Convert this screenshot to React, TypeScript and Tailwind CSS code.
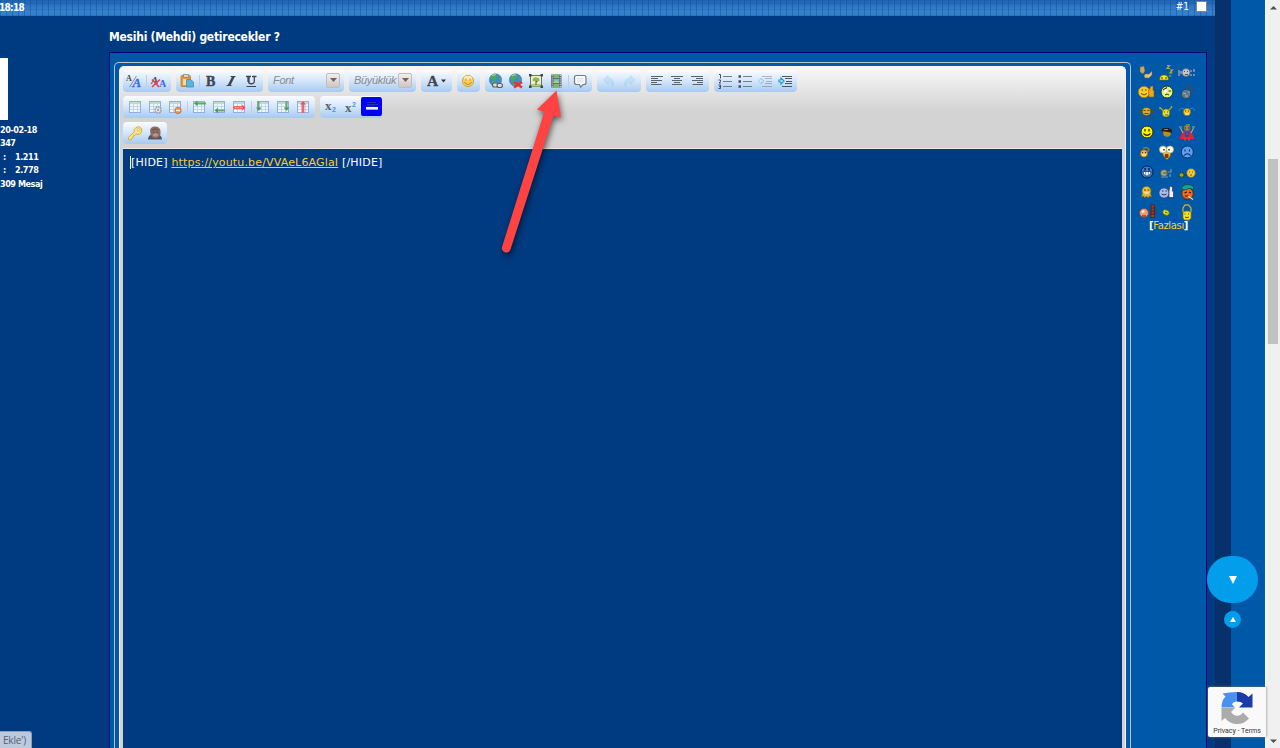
import type { ReactNode } from 'react';

const TABLE_FRAME = (
  <>
    <rect x="2.5" y="2.5" width="11" height="11" fill="#eef6ff" stroke="#93afdb" />
    <path d="M3 4h10" stroke="#b5d3ac" strokeWidth="1.6" />
    <path d="M3 7.500h10M3 10.500h10M6.500 5v8M10.500 5v8" stroke="#bcd3ee" strokeWidth="0.9" />
  </>
);

const GLOBE = (
  <>
    <circle cx="7.500" cy="7" r="6.200" fill="#4385d6" stroke="#5b82bb" strokeWidth="0.600" />
    <path d="M3 3.500C5 1 9 1 9.500 2.500S8 5 7.500 6 4 7 2 6zM4 8c3-1 5 0 5 2s-2 3-3 2-2-2-2-4zM11 4c2 0 2 3 2 4l-2-1z" fill="#49ad50" />
    <path d="M4 3c1-1 3-1.500 4-1" stroke="#bfe6f7" strokeWidth="0.800" fill="none" />
  </>
);

/** A 16px toolbar drawing centred in its 20px button. */
function Tool({ label, faded, children }: { label: string; faded?: boolean; children: ReactNode }) {
  return (
    <button type="button" aria-label={label} className="flex h-[22px] w-5 shrink-0 items-center justify-center">
      <svg className={faded ? 'h-4 w-4 opacity-40' : 'h-4 w-4'} viewBox="0 0 16 16" fill="none">
        {children}
      </svg>
    </button>
  );
}

function Separator() {
  return (
    <span className="flex w-1 shrink-0 items-center justify-center">
      <span className="h-3 w-px bg-[#c3ccd6]" />
    </span>
  );
}

function Group({ className, children }: { className: string; children: ReactNode }) {
  return (
    <div
      className={`flex h-[22px] shrink-0 overflow-hidden rounded-[4px] bg-gradient-to-b from-[#fafcff] via-[#d4e6fa] to-[#a6caf0] ${className}`}
    >
      {children}
    </div>
  );
}

function Combo({ label }: { label: string }) {
  return (
    <div className="flex h-5 w-full items-center justify-between pr-1 pl-[5px] text-[11px] tracking-[-0.3px] text-[#8b8b8b] italic">
      <span className="leading-none">{label}</span>
      <span className="flex h-[15px] w-[14px] items-center justify-center rounded-[2px] border border-[#c3bcb9] bg-gradient-to-b from-[#f2efee] to-[#cfc6c3]">
        <svg className="h-1 w-[7px]" viewBox="0 0 7 4">
          <path d="M0 0h7L3.500 4z" fill="#6c6461" />
        </svg>
      </span>
    </div>
  );
}

function Toolbar() {
  return (
    <div className="flex h-[81px] flex-col gap-1 rounded-t-[4px] bg-gradient-to-b from-[#f5f5f5] from-5% to-[#d3d3d3] to-55% pt-[3px] pl-[3px] font-['Liberation_Sans',Arial,sans-serif]">
      <div className="flex gap-[5px]">
        <Group className="w-12 pl-px">
          <Tool label="Remove formatting">
            <text x="0" y="7.500" fontSize="8" fontWeight="700" fill="#444" fontFamily="Liberation Serif">A</text>
            <path d="M3.500 14L10.500 3" stroke="#777" strokeWidth="0.800" />
            <text x="6.500" y="14" fontSize="13" fontWeight="700" fontStyle="italic" fill="#3c6be8" stroke="#3c6be8" strokeWidth="0.300" fontFamily="Liberation Serif">A</text>
          </Tool>
          <Separator />
          <Tool label="Switch editor mode">
            <text x="1" y="10.500" fontSize="11" fontStyle="italic" fontWeight="700" fill="#555" fontFamily="Liberation Serif">A</text>
            <text x="9" y="13.500" fontSize="10" fontWeight="700" fill="#3c6be8" fontFamily="Liberation Serif">A</text>
            <path d="M2 6.500l7 7.500M10 6.500L2 14" stroke="#ef3b46" strokeWidth="1.600" />
          </Tool>
        </Group>

        <Group className="w-[87px] pl-px">
          <Tool label="Paste">
            <rect x="2" y="2.500" width="9.500" height="11" rx="1" fill="#e79b3c" stroke="#b56f22" strokeWidth="0.700" />
            <path d="M4.500 1.500h5v3h-5z" fill="#d9d3c9" stroke="#8a7660" strokeWidth="0.700" />
            <path d="M4 6h6v6H4z" fill="#f7d9a6" />
            <path d="M7.500 6.500h4l3 2.500V14h-7z" fill="#5cb3e0" stroke="#3b86b5" strokeWidth="0.700" />
          </Tool>
          <Separator />
          <Tool label="Bold">
            <text x="3" y="12.500" fontSize="14" fontWeight="700" fill="#42464f" stroke="#42464f" strokeWidth="0.400" fontFamily="Liberation Serif">B</text>
          </Tool>
          <Tool label="Italic">
            <path d="M7.500 3.500h5M3.500 12.500h5" stroke="#42464f" strokeWidth="1.200" />
            <path d="M10.500 3.500L6 12.500" stroke="#42464f" strokeWidth="2.600" />
          </Tool>
          <Tool label="Underline">
            <path d="M3 3.500h5M9 3.500h4.500M5.500 3.500v5c0 3 5.800 3 5.800 0v-5" stroke="#42464f" strokeWidth="1.300" />
            <path d="M5.500 3.500V9" stroke="#42464f" strokeWidth="2.200" />
            <path d="M3.500 13.500h9.500" stroke="#42464f" strokeWidth="1.200" />
          </Tool>
        </Group>

        <Group className="w-[76px]">
          <Combo label="Font" />
        </Group>
        <Group className="w-[67px]">
          <Combo label="Büyüklük" />
        </Group>

        <Group className="w-[31px] items-center pl-[6px]">
          <svg className="h-4 w-[21px]" viewBox="0 0 21 16">
            <text x="0" y="13" fontSize="15.500" fontWeight="700" fill="#42464f" stroke="#42464f" strokeWidth="0.300" fontFamily="Liberation Serif">A</text>
            <path d="M14 6.500h5l-2.500 3z" fill="#333" />
          </svg>
        </Group>

        <Group className="w-[23px] pl-px">
          <Tool label="Smilies">
            <circle cx="8" cy="8" r="5.600" fill="#f9d15b" stroke="#d6a23b" />
            <ellipse cx="8" cy="5" rx="4" ry="2.200" fill="#fdeeb0" />
            <path d="M6 5.500v2M10 5.500v2M4.500 9c1.500 3.200 5.500 3.200 7 0" stroke="#b48331" />
          </Tool>
        </Group>

        <Group className="w-[107px] pl-px">
          <Tool label="Insert link">
            {GLOBE}
            <rect x="4.500" y="10" width="5.500" height="4" rx="2" fill="#ddd" stroke="#5a5f66" strokeWidth="1.100" />
            <rect x="9" y="10.500" width="5.500" height="4" rx="2" fill="#ddd" stroke="#5a5f66" strokeWidth="1.100" />
          </Tool>
          <Tool label="Remove link">
            {GLOBE}
            <path d="M6 9l8 5.500M14 9l-8 5.500" stroke="#e63232" strokeWidth="2.600" />
          </Tool>
          <Tool label="Insert image">
            <rect x="2.500" y="2.500" width="11" height="11" fill="#e8efc4" stroke="#6f785f" />
            <path d="M3 11h10v2.500H3z" fill="#a9cf7f" />
            <path d="M8 12V7M8 9l2.500-2" stroke="#795c35" strokeWidth="1.200" />
            <path d="M4.500 7.500q1-4 4-3 3 0 3 3-2 1.500-3.500 0-2 1.500-3.500 0z" fill="#8ab75c" />
            <path d="M1 1h2.500v2.500H1zM12.500 1H15v2.500h-2.500zM1 12.500h2.500V15H1zM12.500 12.500H15V15h-2.500z" fill="#42463c" />
          </Tool>
          <Tool label="Insert video">
            <path d="M3 1.500h10.500v13H3z" fill="#6a6e72" />
            <path d="M5.500 1.500h5.500v3.500H5.500zM5.500 11h5.500v3.500H5.500z" fill="#78b96a" />
            <path d="M5.500 6h5.500v4H5.500z" fill="#67b7dc" />
            <path d="M5.500 9l3-2 2.500 2v1h-5.500z" fill="#a9d16e" />
            <path d="M4.200 2v12M12.300 2v12" stroke="#d7dbe0" strokeWidth="1" strokeDasharray="1 1.200" />
          </Tool>
          <Separator />
          <Tool label="Quote">
            <path d="M4.500 2.500h7.500q2 0 2 2v5q0 2-2 2h-1l-2.300 2.700-1.200-2.700h-3q-2 0-2-2v-5q0-2 2-2z" fill="#f6f9fc" stroke="#777a7e" strokeWidth="1.200" />
            <path d="M5 5.500h6.500M5 7.200h6.500M5 9h6.500" stroke="#d8dce4" strokeWidth="0.800" />
          </Tool>
        </Group>

        <Group className="w-11 pl-0.5">
          <Tool label="Undo" faded>
            <path d="M2.500 7l4.500-4.500V5c5 .5 6.500 4 4.500 8.500C11 10.500 9.500 9 7 9v2.500z" fill="#9bd6ef" stroke="#7db8d8" strokeWidth="0.700" />
          </Tool>
          <Tool label="Redo" faded>
            <path d="M14 7L9.500 2.500V5C4.500 5.500 2.500 9 4.500 13.500 5 10.500 7 9 9.500 9v2.500z" fill="#9bd6ef" stroke="#7db8d8" strokeWidth="0.700" />
          </Tool>
        </Group>

        <Group className="w-[63px] pl-px">
          <Tool label="Align left">
            <path d="M2 3.500h12M2 5.500h7M2 7.500h11M2 9.500h6M2 11.500h10.500" stroke="#5d6269" strokeWidth="1.200" />
          </Tool>
          <Tool label="Align center">
            <path d="M2 3.500h12M5 5.500h6M3 7.500h10M5 9.500h6M3 11.500h10" stroke="#5d6269" strokeWidth="1.200" />
          </Tool>
          <Tool label="Align right">
            <path d="M2 3.500h12M7 5.500h7M3 7.500h11M8 9.500h6M3.500 11.500H14" stroke="#5d6269" strokeWidth="1.200" />
          </Tool>
        </Group>

        <Group className="w-[83px] pl-px">
          <Tool label="Ordered list">
            <path d="M6 3.500h9M6 8.500h9M6 13.500h9" stroke="#6f8088" strokeWidth="1.200" />
            <path d="M2 1.500h1.500v4M1.500 7h2v1.500l-1.500 1.500h2M1.500 12h2v3.500h-2M2 13.700h1.500" stroke="#4b4b66" />
          </Tool>
          <Tool label="Unordered list">
            <path d="M6 3.500h9M6 8.500h9M6 13.500h9" stroke="#6f8088" strokeWidth="1.200" />
            <path d="M1.500 2.200h2.500v2.500H1.500zM1.500 7.200h2.500v2.500H1.500zM1.500 12.200h2.500v2.500H1.500z" fill="#4b4b66" />
          </Tool>
          <Tool label="Outdent" faded>
            <path d="M5 3.500h10M8 5.500h7M9 8.500h6M8 10.500h7M5 13.500h10" stroke="#5d6269" />
            <path d="M1.500 8l3-3v2h2v2h-2v2z" fill="#d6f2fc" stroke="#39a6d4" />
          </Tool>
          <Tool label="Indent">
            <path d="M5 3.500h10M8 5.500h7M9 8.500h6M8 10.500h7M5 13.500h10" stroke="#51565d" />
            <path d="M7 8L4 5v2H2v2h2v2z" fill="#d6f2fc" stroke="#249bd1" strokeWidth="1.200" />
          </Tool>
        </Group>
      </div>

      <div className="flex gap-[5px]">
        <Group className="w-48 pl-0.5">
          <Tool label="Insert table">{TABLE_FRAME}</Tool>
          <Tool label="Table properties">
            {TABLE_FRAME}
            <circle cx="11" cy="11" r="3" fill="#e2e4e6" stroke="#9ba1a8" strokeWidth="1.500" strokeDasharray="1.600 .7" />
            <circle cx="11" cy="11" r="1" fill="#8f979f" />
          </Tool>
          <Tool label="Delete table">
            {TABLE_FRAME}
            <circle cx="11" cy="11.500" r="3.200" fill="#ef8c45" stroke="#cc6828" strokeWidth="0.700" />
            <path d="M9 11.500h4" stroke="#fff" strokeWidth="1.300" />
          </Tool>
          <Separator />
          <Tool label="Insert row before">
            {TABLE_FRAME}
            <path d="M5 4.500h10" stroke="#5fab68" strokeWidth="2" />
            <path d="M3 4.500l3.500-2.700v5.400z" fill="#4a9d55" />
          </Tool>
          <Tool label="Insert row after">
            {TABLE_FRAME}
            <path d="M6 11.500h8" stroke="#5fab68" strokeWidth="2" />
            <path d="M3.500 11.500L7 8.800v5.400z" fill="#4a9d55" />
          </Tool>
          <Tool label="Delete row">
            {TABLE_FRAME}
            <path d="M2 8.500h12" stroke="#f0646e" strokeWidth="3" />
            <path d="M11 5.500l3.500 3-3.500 3z" fill="#ee5460" />
            <path d="M4 8.500h8" stroke="#ffd4d7" strokeWidth="0.800" strokeDasharray="1.500 1" />
          </Tool>
          <Separator />
          <Tool label="Insert column before">
            {TABLE_FRAME}
            <path d="M3.500 2v8" stroke="#5fab68" strokeWidth="2" />
            <path d="M1 8.500h5.500L3.700 12z" fill="#4a9d55" />
          </Tool>
          <Tool label="Insert column after">
            {TABLE_FRAME}
            <path d="M11.500 2v8" stroke="#5fab68" strokeWidth="2" />
            <path d="M8.800 8.500h5.500L11.500 12z" fill="#4a9d55" />
          </Tool>
          <Tool label="Delete column">
            {TABLE_FRAME}
            <path d="M8 4v10" stroke="#f0646e" strokeWidth="2.600" />
            <path d="M5 5.500L8 2l3 3.500z" fill="#ee5460" />
          </Tool>
        </Group>
        <Group className="w-[62px] pl-px">
          <Tool label="Subscript">
            <text x="2" y="11" fontSize="13" fontWeight="700" fill="#5b5f66" fontFamily="Liberation Serif">x</text>
            <text x="9" y="13" fontSize="7" fill="#4d96d8" fontWeight="700">2</text>
          </Tool>
          <Tool label="Superscript">
            <text x="2" y="13" fontSize="13" fontWeight="700" fill="#5b5f66" fontFamily="Liberation Serif">x</text>
            <text x="9" y="8" fontSize="7" fill="#4d96d8" fontWeight="700">2</text>
          </Tool>
          <button
            type="button"
            aria-label="Horizontal rule"
            className="mt-px flex h-[19px] w-[21px] items-center justify-center rounded-[2px] bg-[#0000fb]"
          >
            <svg className="h-4 w-4" viewBox="0 0 16 16">
              <path d="M3 3.500h9M3 5.500h11M3 7h8" stroke="#2030b0" />
              <path d="M2 8h12v2.500H2z" fill="#eef2ff" />
              <path d="M2 10.500h12" stroke="#8da4e8" />
            </svg>
          </button>
        </Group>
      </div>

      <div className="flex">
        <Group className="w-11 pl-0.5">
          <Tool label="Hide">
            <path d="M9 2.500q4-2 5.500 1.500t-2 5q-2 1-3.500 0l-1 1.200-1.500.3v1.500l-1.500.5v1.500l-1 .8H1.500v-2.500L7 7Q6.500 4 9 2.500z" fill="#fae18a" stroke="#d9b041" />
            <circle cx="11.500" cy="4.500" r="1.100" fill="#fff" stroke="#c8a043" strokeWidth="0.600" />
          </Tool>
          <Tool label="Mention">
            <path d="M1 14.500q0-4 4-5.500h6q4 1.500 4 5.500z" fill="#5a5660" />
            <path d="M3 6q0-4.500 5-4.500T13.500 6v3q-1 4-5 4T3.500 9z" fill="#8d6e64" />
            <path d="M5 5q3-2.500 6 0M6 7h1.500M9.500 7H11" stroke="#65504a" />
            <ellipse cx="8.500" cy="10" rx="2.800" ry="1.700" fill="#b9968a" />
          </Tool>
        </Group>
      </div>
    </div>
  );
}

// Each smiley is drawn on its own 20x20 cell.
const smilies: { name: string; art: ReactNode }[] = [
  {
    name: 'clap',
    art: (
      <>
        <path d="M4 5l4-1 1 5-2 3-3-2z" fill="#c9a960" stroke="#6b5b32" strokeWidth=".5" />
        <path d="M9 12l4 0 3-3 0 4-3 3H9l-1-2z" fill="#dcc18b" stroke="#75602d" strokeWidth=".5" />
      </>
    ),
  },
  {
    name: 'sleep',
    art: (
      <>
        <path d="M3.500 18q0-5 4.500-5t4.500 5z" fill="#f7ee10" stroke="#6d6600" strokeWidth=".7" />
        <path d="M5 16h2M9 16h2" stroke="#353000" />
        <path d="M11 3.500h2.500l-2.500 3h3M14 8h2.500L14 11h2.500M13 14h2.500" stroke="#b6ad24" strokeWidth="1.200" />
      </>
    ),
  },
  {
    name: 'headphones',
    art: (
      <>
        <circle cx="9" cy="10.500" r="4" fill="#c0c6ca" stroke="#5a6368" strokeWidth=".8" />
        <path d="M2 8v6M4 9v3M14 8v2M14 12v2M17 7v3M17 12v2" stroke="#9baab7" strokeWidth="1.300" />
        <path d="M7 9.500h1M10 9.500h1M8 12.500h3" stroke="#303c48" strokeWidth=".8" />
      </>
    ),
  },
  {
    name: 'thumbs up',
    art: (
      <>
        <circle cx="8" cy="10" r="5.700" fill="#f8c92d" stroke="#a1740c" strokeWidth=".7" />
        <path d="M12.500 9l2.500-5h2v4l1 1v6h-5z" fill="#eaa71b" stroke="#88600d" strokeWidth=".6" />
        <path d="M5.500 8h1.500M9 8h1.500M5 11.500q3 3 6 0" stroke="#684700" />
      </>
    ),
  },
  {
    name: 'wink',
    art: (
      <>
        <circle cx="11" cy="10" r="6" fill="#e3f27a" stroke="#18383b" />
        <path d="M7 8l4-2.500M12.500 9h2.500" stroke="#293b25" strokeWidth="1.200" />
        <circle cx="9.500" cy="9" r="1.700" fill="#fff" />
        <path d="M9 13q2-2 4 0" stroke="#293b25" />
      </>
    ),
  },
  {
    name: 'knight',
    art: (
      <>
        <circle cx="9" cy="12" r="4.700" fill="#62778d" stroke="#2b3c52" strokeWidth=".8" />
        <path d="M8 6l3-2 3 1 1 5M14 4l2 5" stroke="#3f4c5b" strokeWidth="1.400" />
        <path d="M6 11l3 1M11 10h2M8 14h3" stroke="#a3b1be" />
      </>
    ),
  },
  {
    name: 'strong',
    art: (
      <>
        <path d="M4 12V9l3-2h7l3 2v3M8 14l-1 2.500M13 14l1 2.500" stroke="#55501f" strokeWidth="1.600" />
        <ellipse cx="10.500" cy="9.500" rx="4.200" ry="4" fill="#d0a92d" stroke="#514716" strokeWidth=".6" />
        <path d="M7.500 8.500h2M11.500 8.500h2M8.500 11.500h4" stroke="#433600" strokeWidth=".8" />
      </>
    ),
  },
  {
    name: 'cheer',
    art: (
      <>
        <path d="M4.500 6l3 3M15 6l-3 3M4 5v2M15.500 4v2" stroke="#b1a723" strokeWidth="1.400" />
        <ellipse cx="10" cy="11" rx="3.700" ry="4" fill="#e0dd3a" stroke="#6b7115" strokeWidth=".6" />
        <path d="M8 10h1M11 10h1M9 13h3" stroke="#434a0b" strokeWidth=".8" />
      </>
    ),
  },
  {
    name: 'cry',
    art: (
      <>
        <circle cx="10" cy="10" r="3.700" fill="#f0bf27" stroke="#6f6225" strokeWidth=".6" />
        <path d="M7 7L4 6 2 9M13 7l3-1 2 3" stroke="#3a78d0" />
        <path d="M8 9h1M11 9h1" stroke="#65470d" />
        <path d="M8 12h4" stroke="#fff" />
      </>
    ),
  },
  {
    name: 'smile',
    art: (
      <>
        <circle cx="11" cy="10" r="6" fill="#fff200" stroke="#292a1e" />
        <path d="M9 7v2.500M13 7v2.500M7.500 11.500q3.500 3.500 7 0" stroke="#202000" strokeWidth="1.200" />
      </>
    ),
  },
  {
    name: 'officer',
    art: (
      <>
        <circle cx="11" cy="11" r="3.800" fill="#bd9117" />
        <path d="M5 9l2-3h6l3 2v3l-4-1z" fill="#242019" />
        <path d="M8 7.500h4M9 13h4" stroke="#a9842e" />
      </>
    ),
  },
  {
    name: 'hero',
    art: (
      <>
        <path d="M6 9h8l3.500 8H2.500z" fill="#e62424" />
        <path d="M6 11L3.500 6M14 11l2.500-5M2 5h3M15 5h3" stroke="#a79e94" strokeWidth="1.200" />
        <circle cx="10" cy="6" r="3.200" fill="#a0865c" stroke="#544a3f" strokeWidth=".7" />
        <path d="M9 2h4v2H9z" fill="#5b8a43" />
        <path d="M7.500 10h5l-1 5h-3z" fill="#234bb5" />
        <path d="M8 15.500v3M12 15.500v3" stroke="#e33" strokeWidth="1.700" />
        <path d="M8 6h1M11 6h1" stroke="#261e10" />
        <path d="M10 11v2" stroke="#e8493a" />
      </>
    ),
  },
  {
    name: 'salute',
    art: (
      <>
        <circle cx="8" cy="11.500" r="3.800" fill="#eab42b" stroke="#755516" strokeWidth=".7" />
        <path d="M7 6.500q4-2 6 1l-2 3" stroke="#a38327" strokeWidth="1.300" />
        <path d="M6 10.500h1M9 10.500h1" stroke="#3c2b0d" />
        <path d="M6 13h4" stroke="#fff" />
      </>
    ),
  },
  {
    name: 'shock',
    art: (
      <>
        <path d="M6 9h9l-.5 5-3.500 4-3.500-4z" fill="#e7bc29" stroke="#705813" strokeWidth=".7" />
        <circle cx="7" cy="7.500" r="3.600" fill="#fffbe5" stroke="#b0a478" strokeWidth=".7" />
        <circle cx="14" cy="7.500" r="3.600" fill="#fffbe5" stroke="#b0a478" strokeWidth=".7" />
        <path d="M8 7v1.500M13 7v1.500" stroke="#111" strokeWidth="1.300" />
        <ellipse cx="10.700" cy="14" rx="2" ry="2.300" fill="#883015" />
      </>
    ),
  },
  {
    name: 'sad',
    art: (
      <>
        <circle cx="10.300" cy="10" r="6" fill="#5a9ff2" stroke="#102f65" />
        <path d="M8 7.500v2M12.500 7.500v2M7 13.500q3.200-3.500 6.500 0" stroke="#142b59" strokeWidth="1.100" />
      </>
    ),
  },
  {
    name: 'grin',
    art: (
      <>
        <circle cx="11" cy="10" r="6" fill="#347fd5" stroke="#0a1b45" />
        <path d="M9 6v2.500M13 6v2.500" stroke="#06143d" strokeWidth="1.300" />
        <path d="M7 9.500h8q-.5 4.500-4 4.500t-4-4.500z" fill="#fff" stroke="#0a1b45" strokeWidth=".7" />
        <path d="M9.700 10v3.500M12.300 10v3.500" stroke="#0a1b45" strokeWidth=".5" />
      </>
    ),
  },
  {
    name: 'shoot',
    art: (
      <>
        <circle cx="8" cy="11" r="3.300" fill="#a9a777" stroke="#5b6247" strokeWidth=".7" />
        <path d="M5 15h7M12 10h3V7M14 12v3" stroke="#7c989c" strokeWidth="1.200" />
        <path d="M7 11h4" stroke="#45503f" />
      </>
    ),
  },
  {
    name: 'chat',
    art: (
      <>
        <circle cx="14" cy="11" r="4.200" fill="#f7c832" stroke="#a6861a" strokeWidth=".6" />
        <ellipse cx="4.500" cy="13" rx="2.500" ry="2.200" fill="#a2a629" stroke="#253815" strokeWidth=".8" />
        <path d="M7.500 13h2M12 10h1M15 10h1M13 13h2" stroke="#3b3a0b" strokeWidth=".8" />
      </>
    ),
  },
  {
    name: 'laugh',
    art: (
      <>
        <circle cx="10.500" cy="9" r="4.500" fill="#ecc636" stroke="#8a6b16" strokeWidth=".7" />
        <path d="M6.500 11l-1 4 2.500-1v2l2.500-1.500L13 16v-2l2.500 1-1-4" fill="#dcb436" stroke="#7f621c" strokeWidth=".6" />
        <path d="M8 8h2M11.500 8h2" stroke="#513a06" />
        <path d="M8.500 11h4" stroke="#fff" />
      </>
    ),
  },
  {
    name: 'approve',
    art: (
      <>
        <circle cx="8" cy="11" r="5" fill="#a9bdec" stroke="#34496e" strokeWidth=".7" />
        <path d="M13 9l1-5 2.500 1v4l1 1v5.500h-4.500z" fill="#eeeef4" stroke="#2f3654" strokeWidth=".7" />
        <path d="M6 9h1.500M9.500 9H11M5.500 12q2.500 2 5 0" stroke="#233659" />
      </>
    ),
  },
  {
    name: 'smoke',
    art: (
      <>
        <circle cx="10.500" cy="11.500" r="5.700" fill="#f56c18" stroke="#442006" strokeWidth=".8" />
        <path d="M4 7l2-3 3-1.500 5 .5 2.500 2v2.500l-4-1-4 1.500z" fill="#17a394" stroke="#0c4546" strokeWidth=".7" />
        <path d="M7.500 11l2.500-1M12 10l2 1M8 14h4" stroke="#301403" strokeWidth="1.200" />
        <path d="M11 14l5 3.500" stroke="#eed5a6" strokeWidth="1.300" />
      </>
    ),
  },
  {
    name: 'wall',
    art: (
      <>
        <circle cx="8" cy="11" r="4.500" fill="#ee9a77" stroke="#8c3c27" strokeWidth=".8" />
        <circle cx="7" cy="9.500" r="1.500" fill="#ffe9d9" />
        <path d="M15 3h3.500v12.500H15z" fill="#b53414" stroke="#511a10" strokeWidth=".7" />
        <path d="M15 6h3.500M15 9h3.500M15 12h3.500" stroke="#46180d" strokeWidth=".8" />
        <path d="M6 14h4" stroke="#3f1d17" />
      </>
    ),
  },
  {
    name: 'roll',
    art: (
      <>
        <ellipse cx="10" cy="10.500" rx="3.300" ry="2.500" transform="rotate(25 10 10.500)" fill="#e0e421" stroke="#6c7713" strokeWidth=".7" />
        <path d="M9 10l2.500 1" stroke="#526100" />
      </>
    ),
  },
  {
    name: 'angel',
    art: (
      <>
        <path d="M6 10V6l2-3h3.500l2.500 3v4" stroke="#c0ae28" strokeWidth="1.300" />
        <path d="M6 10q4-2 8 0v6l-1.500 2h-5L6 16z" fill="#f7e024" stroke="#897812" strokeWidth=".7" />
        <path d="M8 11.500v1M11.500 11.500v1M8 15q2 1.500 4 0" stroke="#574a00" />
      </>
    ),
  },
];

function SmileyPanel() {
  return (
    <div className="flex w-[71px] flex-col items-center pt-[9px]">
      <div className="grid w-[61px] grid-cols-[20px_21px_20px]">
        {smilies.map(({ name, art }) => (
          <svg key={name} role="img" aria-label={name} className="h-5 w-5" viewBox="0 0 20 20" fill="none">
            {art}
          </svg>
        ))}
      </div>
      <p className="-mt-0.5 ml-1 font-['DejaVu_Sans',sans-serif] text-[10px] leading-[12px] tracking-[-0.35px] text-white">
        <b>[</b>
        <a className="text-[#ffcc33]">Fazlası</a>
        <b>]</b>
      </p>
    </div>
  );
}

function Editor() {
  return (
    <section className="ml-2 flex h-[696px] w-[1098px] shrink-0 border border-b-0 border-[#000080] bg-[#0059a8] pl-1">
      <div className="mt-[9px] flex w-[1017px] flex-col rounded-t-[5px] border border-b-0 border-[#b9c4cf] px-1 pt-[3px]">
        <div className="flex grow flex-col rounded-t-[5px] border border-b-0 border-[#f4f4f4] bg-[#d3d3d3]">
          <Toolbar />
          <div className="mx-[3px] grow border-t border-[#e8e8e8] bg-[#003a80] pt-[7px] pl-[7px] font-['DejaVu_Sans',sans-serif] text-[11px] leading-[14px] tracking-[0.2px] text-white">
            <span className="border-l border-white">[HIDE] </span>
            <a className="tracking-[0.16px] text-[#ffcc33] underline">https://youtu.be/VVAeL6AGlaI</a> [/HIDE]
          </div>
        </div>
      </div>
      <SmileyPanel />
    </section>
  );
}

function UserColumn() {
  return (
    <aside className="flex w-[101px] shrink-0 flex-col border-r border-[#0a3170] pt-[42px] font-['DejaVu_Sans_Condensed','DejaVu_Sans',sans-serif] text-[9px] leading-[13.4px] font-bold tracking-[-0.45px] whitespace-pre text-white">
      <div className="mb-1 h-[62px] w-2 bg-white" />
      <p>20-02-18</p>
      <p>347</p>
      <p className="flex"><span className="w-[15px] pl-[3px]">:</span>1.211</p>
      <p className="flex"><span className="w-[15px] pl-[3px]">:</span>2.778</p>
      <p>309 Mesaj</p>
    </aside>
  );
}

function Scrollbar() {
  return (
    <div className="flex w-[14px] shrink-0 flex-col items-center justify-between bg-[#f0f0f0] pt-[5px] pb-[4px]">
      <svg className="h-[5px] w-[7px]" viewBox="0 0 7 5"><path d="M0 4.500L3.500 1 7 4.500z" fill="#505050" /></svg>
      <div className="mt-[-246px] h-[185px] w-[10px] bg-[#c1c1c1]" />
      <svg className="h-[5px] w-[7px]" viewBox="0 0 7 5"><path d="M0 .5L3.500 4 7 .5z" fill="#505050" /></svg>
    </div>
  );
}

function RecaptchaBadge() {
  return (
    <div className="absolute top-[687px] left-[1208px] flex h-[50px] w-[58px] flex-col items-center rounded-l-[2px] bg-[#f9f9f9] pt-[5px] shadow-[0_0_3px_#777]">
      <svg className="h-8 w-8" viewBox="0 0 32 32">
        <path d="M16 0v9.500q-4 0-5 3l3 3H0.500q0-7 4-11L1.500 1.500Q8 0 16 0z" fill="#4a90ee" />
        <path d="M16 0q7 0 11.500 5L31.500 1.500v14H18l4-4Q20 9.500 16 9.500z" fill="#1c3aa9" />
        <path d="M0.500 16H14l-4 4q3 4.500 8 3.500 3-1 4-3l6 6Q23 32 16 32q-7 0-12-6l-3.500 3z" fill="#ababab" />
      </svg>
      <p className="mt-[3px] font-[Roboto,sans-serif] text-[7px] leading-[8px] whitespace-nowrap text-[#333]">Privacy - Terms</p>
    </div>
  );
}

export default function App() {
  return (
    <div className="relative flex h-[748px] w-[1280px] overflow-hidden bg-[#0059a8]">
      <main className="flex w-[1215px] shrink-0 flex-col bg-[#003a80]">
        <header className="flex h-4 shrink-0 items-center justify-between bg-[#2c73c0] bg-[repeating-linear-gradient(90deg,#0f4c9470_0_1px,transparent_1px_6px),repeating-linear-gradient(0deg,#0f4c9440_0_1px,transparent_1px_6px),linear-gradient(#1d62b1,#3580cc_60%,#3580cc)] pr-[8px] pb-[3px] font-['DejaVu_Sans_Condensed','DejaVu_Sans',sans-serif] text-[10px] leading-[13px] text-white">
          <span className="-ml-px pt-px font-bold tracking-[-0.7px]">18:18</span>
          <span className="flex items-center gap-[7px]">
            #1
            <span className="h-[11px] w-[11px] border border-[#858585] bg-white" />
          </span>
        </header>
        <div className="flex grow">
          <UserColumn />
          <div className="flex flex-col">
            <h1 className="h-9 pt-[14px] pl-[8px] font-['DejaVu_Sans_Condensed','DejaVu_Sans',sans-serif] text-[12px] leading-[15px] font-bold tracking-[-0.25px] whitespace-nowrap text-white">
              Mesihi (Mehdi) getirecekler ?
            </h1>
            <Editor />
          </div>
        </div>
      </main>
      <div className="w-4 shrink-0 bg-[#06316b]" />
      <div className="grow border-r border-white" />
      <Scrollbar />

      {/* Pointer drawn over the video button */}
      <svg className="absolute top-[85px] left-[495px] h-[175px] w-[85px] drop-shadow-[1px_3px_3px_#0009]" viewBox="0 0 85 175">
        <path d="M61.500 5.500L42 24.500l7.200 2.500L7.200 161.500a4.200 4.200 0 0 0 8.200 3.200L58.500 30.500 66 32.500z" fill="#ff4343" />
      </svg>

      <button type="button" aria-label="Page down" className="absolute top-[556px] left-[1207px] flex h-[47px] w-[51px] items-center justify-center rounded-full bg-[#039eeb]">
        <svg className="h-2 w-2" viewBox="0 0 8 8"><path d="M0 0h8L4 8z" fill="#fff" /></svg>
      </button>
      <button type="button" aria-label="Page up" className="absolute top-[611px] left-[1224px] flex h-[17px] w-[17px] items-center justify-center rounded-full bg-[#039eeb]">
        <svg className="mb-px h-[5px] w-[6px]" viewBox="0 0 6 5"><path d="M0 5h6L3 0z" fill="#fff" /></svg>
      </button>
      <RecaptchaBadge />

      <div className="absolute top-[731px] left-0 h-[17px] w-8 rounded-tr-[3px] border-t border-r border-[#8f9fb6] bg-[#bdc9dd] pl-[3px] font-['Open_Sans',sans-serif] text-[10px] leading-[17px] tracking-[-0.2px] text-[#555f70]">
        Ekle')
      </div>
    </div>
  );
}
